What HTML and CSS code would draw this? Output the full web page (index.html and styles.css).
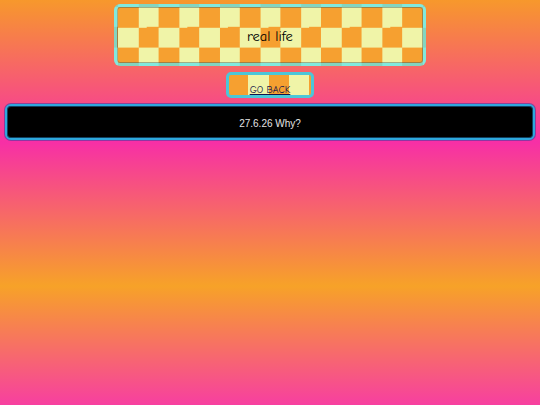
FILE: index.html
```html
<!DOCTYPE html>
<html>
<head>
<meta charset="utf-8">
<link rel="stylesheet" href="styles.css">
</head>
<body>
<div class="page">
  <header class="title-box"><h1 class="title">real life</h1></header>
  <div class="back-wrap"><a class="back" href="#">GO BACK</a></div>
  <div class="entry">27.6.26 Why?</div>
</div>
</body>
</html>
```
FILE: styles.css
```css
html, body {
  margin: 0;
  padding: 0;
  height: 100%;
}
body {
  background: linear-gradient(to bottom, #f7982c 0px, #f72fa6 142px, #f7a228 286px, #f73fa0 405px);
  background-repeat: no-repeat;
  min-height: 405px;
}
.page {
  padding: 4px 5px;
  display: flex;
  flex-direction: column;
  align-items: center;
}
.title-box {
  width: 306px;
  height: 56px;
  border: 3px solid rgba(92, 230, 240, 0.75);
  border-radius: 6px;
  box-shadow: inset 0 0 0 1px rgba(60, 90, 90, 0.45);
  background-image: conic-gradient(#f0f4a8 0 25%, #f6a030 0 50%, #f0f4a8 0 75%, #f6a030 0);
  background-size: 40.6px 40.6px;
  background-position: 1px 0px;
  display: flex;
  align-items: center;
  justify-content: center;
}
.title {
  margin: 0;
  font-family: "Comic Sans MS", "Comic Neue", "Noto Sans", sans-serif;
  font-weight: 500;
  font-size: 14.5px;
  color: #000;
  padding-top: 2px;
}
.back-wrap {
  margin-top: 6px;
  width: 82px;
  height: 20px;
  border: 3px solid #4cc6d8;
  border-radius: 5px;
  background-image: linear-gradient(to right, #f6a030 0 19px, #f0f4a8 19px 40px, #f6a030 40px 60px, #f0f4a8 60px 80px, #f6a030 80px);
  display: flex;
  justify-content: center;
  align-items: flex-end;
}
.back {
  font-family: "Comic Sans MS", "Comic Neue", "Noto Sans", sans-serif;
  font-size: 10px;
  font-weight: 500;
  color: #14144a;
  text-decoration: underline;
  line-height: 12px;
  margin-bottom: -1px;
}
.entry {
  align-self: stretch;
  margin-top: 6px;
  height: 30px;
  background: #000;
  border: 2px solid #2ea8dc;
  border-radius: 6px;
  box-shadow: 0 0 0 1px rgba(70, 60, 160, 0.6), inset 0 0 0 1px #104060;
  color: #e4e4e4;
  font-family: "Liberation Sans", Arial, sans-serif;
  font-size: 10px;
  display: flex;
  align-items: center;
  justify-content: center;
  padding-top: 2px;
}
```
